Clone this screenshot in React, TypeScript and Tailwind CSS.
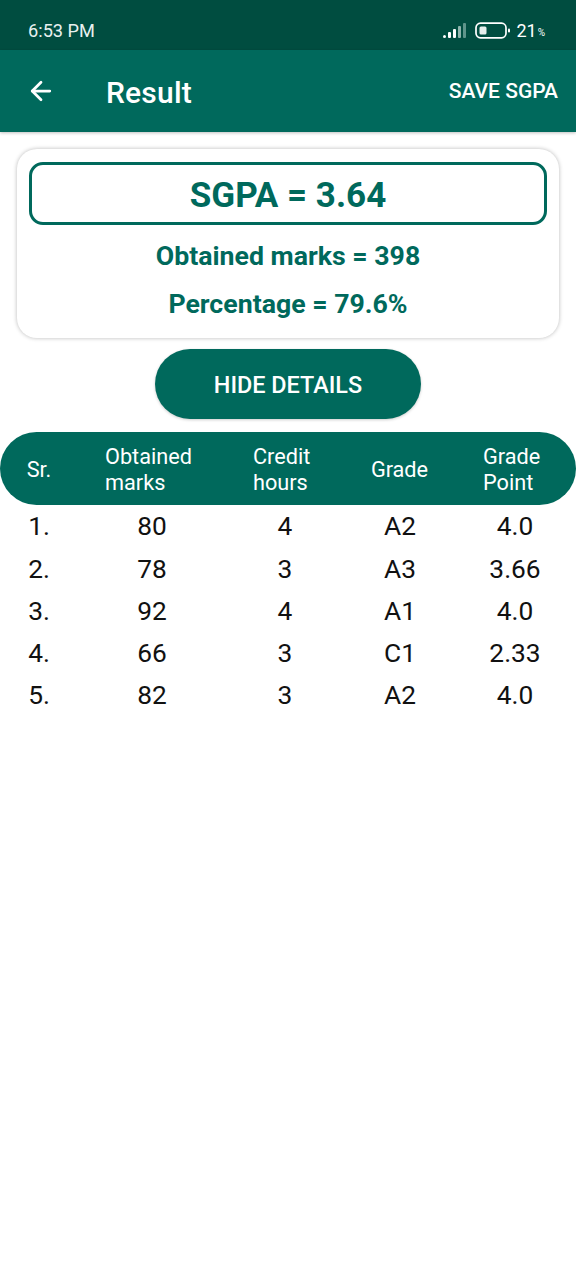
import { ArrowLeft } from "lucide-react";

const rows = [
  { sr: "1.", marks: "80", credit: "4", grade: "A2", point: "4.0" },
  { sr: "2.", marks: "78", credit: "3", grade: "A3", point: "3.66" },
  { sr: "3.", marks: "92", credit: "4", grade: "A1", point: "4.0" },
  { sr: "4.", marks: "66", credit: "3", grade: "C1", point: "2.33" },
  { sr: "5.", marks: "82", credit: "3", grade: "A2", point: "4.0" },
];

function StatusIcons() {
  return (
    <div className="flex items-center">
      <svg width="26" height="18" viewBox="0 0 26 18" className="mr-[7px]">
        <rect x="1" y="13" width="3" height="3" rx="1.5" fill="#fff" />
        <rect x="6" y="10" width="3" height="6" rx="1" fill="#fff" />
        <rect x="11" y="7" width="3" height="9" rx="1" fill="#fff" />
        <rect x="16" y="4" width="3" height="12" rx="1" fill="#8fb5ad" />
        <rect x="21" y="1" width="3" height="15" rx="1" fill="#5f958b" />
      </svg>
      <svg width="36" height="18" viewBox="0 0 36 18" className="mr-[5px]">
        <rect x="1" y="1.2" width="30" height="14.6" rx="4.5" fill="none" stroke="#fff" strokeWidth="1.7" />
        <rect x="4.5" y="4.5" width="7" height="8" rx="1.5" fill="#e6efed" />
        <rect x="33" y="6.5" width="2" height="4" rx="1" fill="#fff" />
      </svg>
      <span className="text-[18px] text-white leading-none">21</span>
      <span className="text-[10px] text-white leading-none mt-[4px] ml-[1px]">%</span>
    </div>
  );
}

export default function App() {
  return (
    <div className="w-[576px] h-[1280px] bg-white font-['Roboto',sans-serif] overflow-hidden">
      <div className="h-[50px] bg-[#004d40] flex items-center justify-between pl-[28px] pr-[31px] pt-[12px]">
        <span className="text-[18.2px] text-[#e8f1ef]">6:53 PM</span>
        <StatusIcons />
      </div>

      <div className="h-[82px] bg-[#00695c] flex items-center pl-[26px] pr-[18px] shadow-[0_1px_3px_rgba(0,0,0,0.25)]">
        <ArrowLeft size={30} strokeWidth={2.2} className="text-white" />
        <h1 className="ml-[50px] mt-[3px] text-[30px] font-medium text-white tracking-[0.2px]">Result</h1>
        <button className="ml-auto mt-[2px] text-[21px] font-medium text-white">SAVE SGPA</button>
      </div>

      <div className="mx-[17px] mt-[17px] h-[189px] rounded-[20px] bg-white shadow-[0_0_4px_rgba(0,0,0,0.28)] px-[12px] pt-[13px]">
        <div className="h-[63px] rounded-[14px] border-[3px] border-[#00695c] flex items-center justify-center pt-[3px]">
          <span className="text-[35px] font-bold text-[#00695c] leading-none">SGPA = 3.64</span>
        </div>
        <p className="mt-[15px] text-center text-[26.7px] font-bold text-[#00695c] leading-[32px]">Obtained marks = 398</p>
        <p className="mt-[16px] text-center text-[26.7px] font-bold text-[#00695c] leading-[32px]">Percentage = 79.6%</p>
      </div>

      <div className="flex justify-center mt-[11px]">
        <button className="w-[266px] h-[70px] rounded-[35px] bg-[#00695c] text-white text-[23.4px] font-medium pt-[3px] shadow-[0_1px_3px_rgba(0,0,0,0.2)]">
          HIDE DETAILS
        </button>
      </div>

      <div className="mt-[13px] h-[73px] rounded-[37px] bg-[#00695c] text-white text-[21.7px] leading-[25.5px] grid grid-cols-[78px_148px_112px_124px_114px] items-center pt-[2px]">
        <div className="text-center">Sr.</div>
        <div className="pl-[27px]">Obtained<br />marks</div>
        <div className="pl-[27px]">Credit<br />hours</div>
        <div className="text-center pr-[1px]">Grade</div>
        <div className="pl-[21px]">Grade<br />Point</div>
      </div>

      <div className="mt-[1px]">
        {rows.map((r) => (
          <div key={r.sr} className="h-[42.25px] grid grid-cols-[78px_148px_118px_112px_118px] items-center text-[26.3px] text-[#111] text-center">
            <div>{r.sr}</div>
            <div>{r.marks}</div>
            <div>{r.credit}</div>
            <div>{r.grade}</div>
            <div>{r.point}</div>
          </div>
        ))}
      </div>
    </div>
  );
}
